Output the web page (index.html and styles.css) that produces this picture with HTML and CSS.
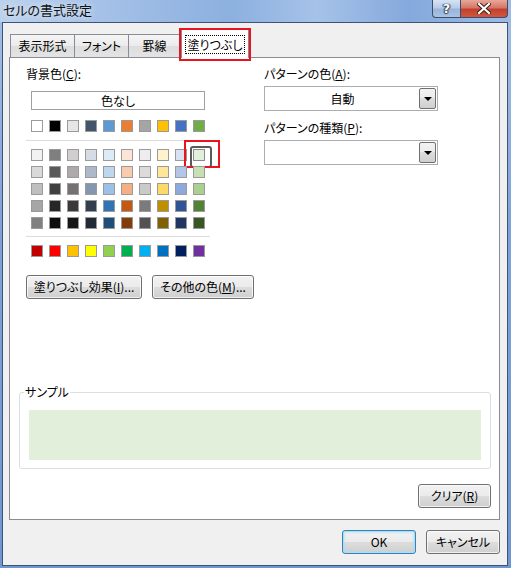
FILE: index.html
```html
<!DOCTYPE html>
<html lang="ja">
<head>
<meta charset="utf-8">
<title>セルの書式設定</title>
<link rel="stylesheet" href="styles.css">
</head>
<body>
<div class="window">
  <div class="titlebar">
    <span class="title">セルの書式設定</span>
    <div class="controls">
      <div class="ctl help">?</div>
      <div class="ctl close">
        <svg width="14" height="11" viewBox="0 0 14 11"><path d="M2 1 L12 10 M12 1 L2 10" stroke="#3a1a14" stroke-width="4" stroke-linecap="square"/><path d="M2 1 L12 10 M12 1 L2 10" stroke="#ffffff" stroke-width="2.2" stroke-linecap="square"/></svg>
      </div>
    </div>
  </div>
  <div class="client">
    <div class="tabs">
      <div class="tab t1">表示形式</div>
      <div class="tab t2">フォント</div>
      <div class="tab t3">罫線</div>
      <div class="tab sel"><span class="focus">塗りつぶし</span><span class="hl"></span></div>
    </div>
    <div class="panel">
      <div class="toprow">
        <div class="leftcol">
          <div class="label">背景色(<u>C</u>):</div>
          <div class="nocolor">色なし</div>
          <div class="swrow first">
            <span class="sw" style="background:#ffffff"></span><span class="sw" style="background:#000000"></span><span class="sw" style="background:#e7e6e6"></span><span class="sw" style="background:#44546a"></span><span class="sw" style="background:#5b9bd5"></span><span class="sw" style="background:#ed7d31"></span><span class="sw" style="background:#a5a5a5"></span><span class="sw" style="background:#ffc000"></span><span class="sw" style="background:#4472c4"></span><span class="sw" style="background:#70ad47"></span>
          </div>
          <div class="sep"></div>
          <div class="theme">
            <div class="swrow">
              <span class="sw" style="background:#f2f2f2"></span><span class="sw" style="background:#7f7f7f"></span><span class="sw" style="background:#d0cece"></span><span class="sw" style="background:#d6dce4"></span><span class="sw" style="background:#ddebf7"></span><span class="sw" style="background:#fce4d6"></span><span class="sw" style="background:#ededed"></span><span class="sw" style="background:#fff2cc"></span><span class="sw" style="background:#d9e1f2"></span><span class="sw picked" style="background:#e2efda"><span class="hl2"></span></span>
            </div>
            <div class="swrow">
              <span class="sw" style="background:#d9d9d9"></span><span class="sw" style="background:#595959"></span><span class="sw" style="background:#aeaaaa"></span><span class="sw" style="background:#acb9ca"></span><span class="sw" style="background:#bdd7ee"></span><span class="sw" style="background:#f8cbad"></span><span class="sw" style="background:#dbdbdb"></span><span class="sw" style="background:#ffe699"></span><span class="sw" style="background:#b4c6e7"></span><span class="sw" style="background:#c6e0b4"></span>
            </div>
            <div class="swrow">
              <span class="sw" style="background:#bfbfbf"></span><span class="sw" style="background:#404040"></span><span class="sw" style="background:#757171"></span><span class="sw" style="background:#8497b0"></span><span class="sw" style="background:#9bc2e6"></span><span class="sw" style="background:#f4b084"></span><span class="sw" style="background:#c9c9c9"></span><span class="sw" style="background:#ffd966"></span><span class="sw" style="background:#8ea9db"></span><span class="sw" style="background:#a9d08e"></span>
            </div>
            <div class="swrow">
              <span class="sw" style="background:#a6a6a6"></span><span class="sw" style="background:#262626"></span><span class="sw" style="background:#3a3838"></span><span class="sw" style="background:#333f4f"></span><span class="sw" style="background:#2f75b5"></span><span class="sw" style="background:#c65911"></span><span class="sw" style="background:#7b7b7b"></span><span class="sw" style="background:#bf8f00"></span><span class="sw" style="background:#305496"></span><span class="sw" style="background:#548235"></span>
            </div>
            <div class="swrow">
              <span class="sw" style="background:#808080"></span><span class="sw" style="background:#0d0d0d"></span><span class="sw" style="background:#161616"></span><span class="sw" style="background:#222b35"></span><span class="sw" style="background:#1f4e78"></span><span class="sw" style="background:#833c0c"></span><span class="sw" style="background:#525252"></span><span class="sw" style="background:#806000"></span><span class="sw" style="background:#203764"></span><span class="sw" style="background:#375623"></span>
            </div>
          </div>
          <div class="sep sep2"></div>
          <div class="swrow std">
            <span class="sw" style="background:#c00000"></span><span class="sw" style="background:#ff0000"></span><span class="sw" style="background:#ffc000"></span><span class="sw" style="background:#ffff00"></span><span class="sw" style="background:#92d050"></span><span class="sw" style="background:#00b050"></span><span class="sw" style="background:#00b0f0"></span><span class="sw" style="background:#0070c0"></span><span class="sw" style="background:#002060"></span><span class="sw" style="background:#7030a0"></span>
          </div>
          <div class="btnrow">
            <div class="btn fx">塗りつぶし効果(<u>I</u>)...</div>
            <div class="btn more">その他の色(<u>M</u>)...</div>
          </div>
        </div>
        <div class="rightcol">
          <div class="label">パターンの色(<u>A</u>):</div>
          <div class="combo"><span class="ctext">自動</span><span class="drop"><span class="tri"></span></span></div>
          <div class="label l2">パターンの種類(<u>P</u>):</div>
          <div class="combo"><span class="ctext"></span><span class="drop"><span class="tri"></span></span></div>
        </div>
      </div>
      <fieldset class="sample">
        <legend>サンプル</legend>
        <div class="preview"></div>
      </fieldset>
      <div class="clearrow">
        <div class="btn clear">クリア(<u>R</u>)</div>
      </div>
    </div>
    <div class="footer">
      <div class="btn ok">OK</div>
      <div class="btn cancel">キャンセル</div>
    </div>
  </div>
</div>
</body>
</html>
```

FILE: styles.css
```css
* { box-sizing: border-box; }
html, body { margin: 0; padding: 0; }
body {
  width: 511px;
  height: 568px;
  overflow: hidden;
  font-family: "Noto Sans CJK JP", "Noto Sans", sans-serif;
  font-size: 12px;
  font-feature-settings: "palt" 1;
  color: #000;
}
u { text-decoration: underline; text-underline-offset: 1px; }

.window {
  width: 511px;
  height: 568px;
  display: flex;
  flex-direction: column;
  padding: 0 3px 2px 2px;
  background: linear-gradient(180deg, #a3bfe6 0%, #7fa3d8 40%, #6f96d0 100%);
}

.titlebar {
  height: 23px;
  margin: 0 -3px 0 -2px;
  padding: 0 3px 0 2px;
  display: flex;
  align-items: flex-start;
  background: linear-gradient(90deg, #bcd2ec 0%, #a5c1e7 20%, #8cb0df 45%, #a6c2e8 62%, #85a9dc 80%, #9dbbe5 100%);
}
.title {
  font-size: 13px;
  line-height: 20px;
  margin-left: 1px;
  color: #111;
  text-shadow: 0 0 6px rgba(255,255,255,0.9);
}
.controls {
  margin-left: auto;
  display: flex;
}
.ctl {
  height: 18px;
  border: 1px solid #3b4d6a;
  border-top: none;
  display: flex;
  align-items: center;
  justify-content: center;
}
.help {
  width: 29px;
  border-radius: 0 0 0 4px;
  background: linear-gradient(180deg, #d6e3f3 0%, #b8cde9 45%, #9ab5da 55%, #a9c3e4 100%);
  color: #fff;
  font-family: "DejaVu Sans", sans-serif;
  font-weight: bold;
  font-size: 13px;
  line-height: 16px;
  text-shadow: 0 0 1px #2a3a55, 1px 0 1px #2a3a55, -1px 0 1px #2a3a55, 0 1px 1px #2a3a55;
}
.close {
  width: 47px;
  border-left: none;
  border-radius: 0 0 4px 0;
  background: linear-gradient(180deg, #e8a89a 0%, #d47766 45%, #c3412c 55%, #d0573f 100%);
}

.client {
  flex: 1;
  display: flex;
  flex-direction: column;
  background: #f0f0f0;
  border: 1px solid #3e5378;
  padding: 6px 7px 11px 6px;
}

.tabs {
  display: flex;
  align-items: flex-end;
  height: 28px;
  position: relative;
  z-index: 2;
}
.tab {
  height: 23px;
  border: 1px solid #898c95;
  border-bottom: none;
  background: linear-gradient(180deg, #f5f5f5 0%, #ebebeb 50%, #dddddd 51%, #e4e4e4 100%);
  display: flex;
  align-items: center;
  justify-content: center;
  line-height: 16px;
  white-space: nowrap;
}
.t1 { width: 65px; margin-left: 1px; }
.t2 { width: 55px; margin-left: -1px; }
.t3 { width: 53px; margin-left: -1px; }
.tab.sel {
  position: relative;
  width: 68px;
  height: 29px;
  margin-left: 0;
  margin-bottom: -1px;
  background: #fff;
}
.focus {
  display: block;
  width: 60px;
  height: 19px;
  border: 1px dotted #000;
  text-align: center;
  line-height: 17px;
  margin-top: 1px;
  white-space: nowrap;
}
.hl {
  position: absolute;
  left: -3px;
  top: -2px;
  width: 72px;
  height: 33px;
  border: 2px solid #e8141e;
}

.panel {
  height: 463px;
  background: #fff;
  border: 1px solid #898c95;
  padding: 8px 8px 0 16px;
  display: flex;
  flex-direction: column;
}
.toprow { display: flex; }
.leftcol { width: 238px; }
.label { line-height: 16px; height: 16px; white-space: nowrap; }

.nocolor {
  margin: 9px 0 0 5px;
  width: 174px;
  height: 19px;
  border: 1px solid #a0a0a0;
  text-align: center;
  line-height: 17px;
}
.swrow {
  display: flex;
  gap: 6px;
  margin-left: 5px;
  height: 12px;
}
.swrow.first { margin-top: 10px; }
.sw {
  width: 12px;
  height: 12px;
  border: 1px solid #9a9a9a;
  display: block;
  position: relative;
}
.sep {
  width: 184px;
  height: 1px;
  background: #dcdcdc;
  margin-top: 8px;
}
.theme {
  margin-top: 8px;
  display: flex;
  flex-direction: column;
  gap: 5px;
}
.sep2 { margin-top: 7px; }
.std { margin-top: 8px; }
.picked { border-color: #8a8a8a; }
.picked::before {
  content: "";
  position: absolute;
  left: -4px;
  top: -4px;
  width: 18px;
  height: 18px;
  border: 2px solid #5a5a5a;
  border-radius: 3px;
  box-shadow: inset 0 0 0 1px #ffffff;
}
.hl2 {
  position: absolute;
  left: -10px;
  top: -10px;
  width: 36px;
  height: 28px;
  border: 2px solid #e8141e;
}

.btnrow {
  display: flex;
  gap: 10px;
  margin-top: 18px;
}
.btn {
  height: 24px;
  border: 1px solid #707070;
  border-radius: 3px;
  background: linear-gradient(180deg, #f2f2f2 0%, #ebebeb 48%, #dddddd 50%, #cfcfcf 100%);
  box-shadow: inset 0 0 0 1px rgba(255,255,255,0.7);
  display: flex;
  align-items: center;
  justify-content: center;
  line-height: 16px;
  white-space: nowrap;
}
.fx { width: 116px; }
.more { width: 102px; }

.rightcol { width: 174px; }
.combo {
  margin-top: 4px;
  height: 25px;
  border: 1px solid #abadb3;
  display: flex;
  align-items: center;
  padding: 1px;
}
.ctext {
  flex: 1;
  text-align: center;
  line-height: 16px;
}
.drop {
  width: 17px;
  height: 21px;
  border: 1px solid #707070;
  border-radius: 2px;
  background: linear-gradient(180deg, #f2f2f2 0%, #ebebeb 48%, #dddddd 50%, #cfcfcf 100%);
  display: flex;
  align-items: center;
  justify-content: center;
}
.tri {
  width: 0;
  height: 0;
  border-left: 4px solid transparent;
  border-right: 4px solid transparent;
  border-top: 4px solid #000;
}
.l2 { margin-top: 9px; }

.sample {
  margin: 85px 0 0 -7px;
  width: 472px;
  padding: 0 9px 8px 9px;
  border: 1px solid #d5dfe5;
  border-radius: 3px;
}
.sample legend {
  padding: 0 1px;
  margin-left: -5px;
  line-height: 16px;
}
.preview {
  margin-top: 10px;
  height: 50px;
  background: #e2efda;
}
.clearrow {
  display: flex;
  justify-content: flex-end;
  margin-top: 15px;
}
.clear { width: 73px; height: 24px; }

.footer {
  display: flex;
  justify-content: flex-end;
  gap: 10px;
  margin-top: 10px;
}
.ok, .cancel { width: 74px; height: 24px; }
.ok {
  border-color: #3c7fb1;
  box-shadow: inset 0 0 0 1px #a8e0f8, inset 0 0 2px 2px rgba(160,220,250,0.45);
}
```
